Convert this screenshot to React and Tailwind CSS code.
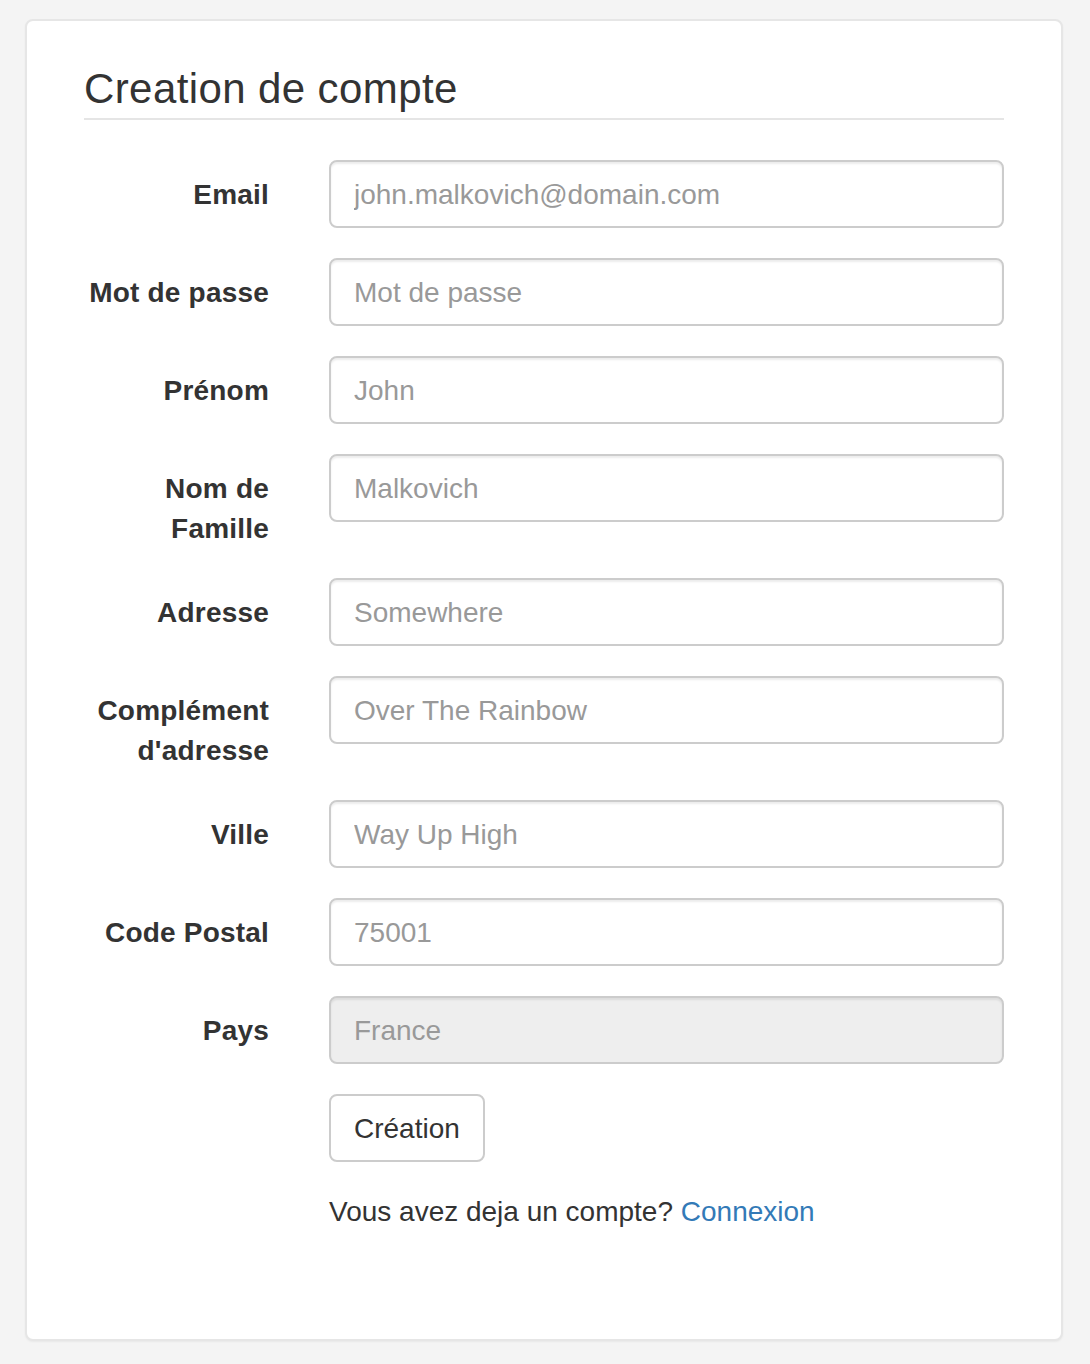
import React from "react";

const fields = [
  { label: "Email", ph: "john.malkovich@domain.com" },
  { label: "Mot de passe", ph: "Mot de passe", type: "password" },
  { label: "Prénom", ph: "John" },
  { label: ["Nom de", "Famille"], ph: "Malkovich" },
  { label: "Adresse", ph: "Somewhere" },
  { label: ["Complément", "d'adresse"], ph: "Over The Rainbow" },
  { label: "Ville", ph: "Way Up High" },
  { label: "Code Postal", ph: "75001" },
  { label: "Pays", ph: "France", disabled: true },
];

export default function App() {
  return (
    <div
      className="min-h-screen bg-[#f4f4f4] pt-[19px] pb-[24px] pl-[25px]"
      style={{ fontFamily: '"Liberation Sans", Arial, sans-serif' }}
    >
      <div className="w-[1038px] bg-white border-2 border-[#e6e6e6] rounded-[8px] shadow-[0_1px_2px_rgba(0,0,0,0.05)] pt-[37px] pb-[107px] px-[57px] text-[#333]">
        <div className="text-[42px] leading-[60px] tracking-[0.4px] border-b-2 border-[#e5e5e5] mb-[40px]">
          <span className="relative top-[1px]">Creation de compte</span>
        </div>
        {fields.map((f, i) => (
          <div key={i} className="flex mb-[30px]">
            <label className="w-[185px] shrink-0 text-right font-bold text-[28px] leading-[40px] pt-[14px] tracking-[0.2px]">
              <span className="relative top-[1px]">
                {Array.isArray(f.label) ? (
                  <>
                    {f.label[0]}
                    <br />
                    {f.label[1]}
                  </>
                ) : (
                  f.label
                )}
              </span>
            </label>
            <div className="ml-[60px] flex-1">
              <input
                type={f.type || "text"}
                placeholder={f.ph}
                disabled={f.disabled}
                className={
                  "block w-full h-[68px] pl-[23px] pr-[24px] pt-[2px] text-[28px] leading-[40px] border-2 border-[#ccc] rounded-[8px] shadow-[inset_0_2px_2px_rgba(0,0,0,0.075)] outline-none placeholder:text-[#999] " +
                  (f.disabled ? "bg-[#eee]" : "bg-white")
                }
              />
            </div>
          </div>
        ))}
        <div className="ml-[245px]">
          <button className="h-[68px] px-[23px] pt-[2px] bg-white border-2 border-[#ccc] rounded-[8px] text-[28px] leading-[40px] text-[#333] mb-[30px]">
            Création
          </button>
          <div className="text-[28px] leading-[40px]">
            Vous avez deja un compte?{" "}
            <a href="#" className="text-[#337ab7]">
              Connexion
            </a>
          </div>
        </div>
      </div>
    </div>
  );
}
